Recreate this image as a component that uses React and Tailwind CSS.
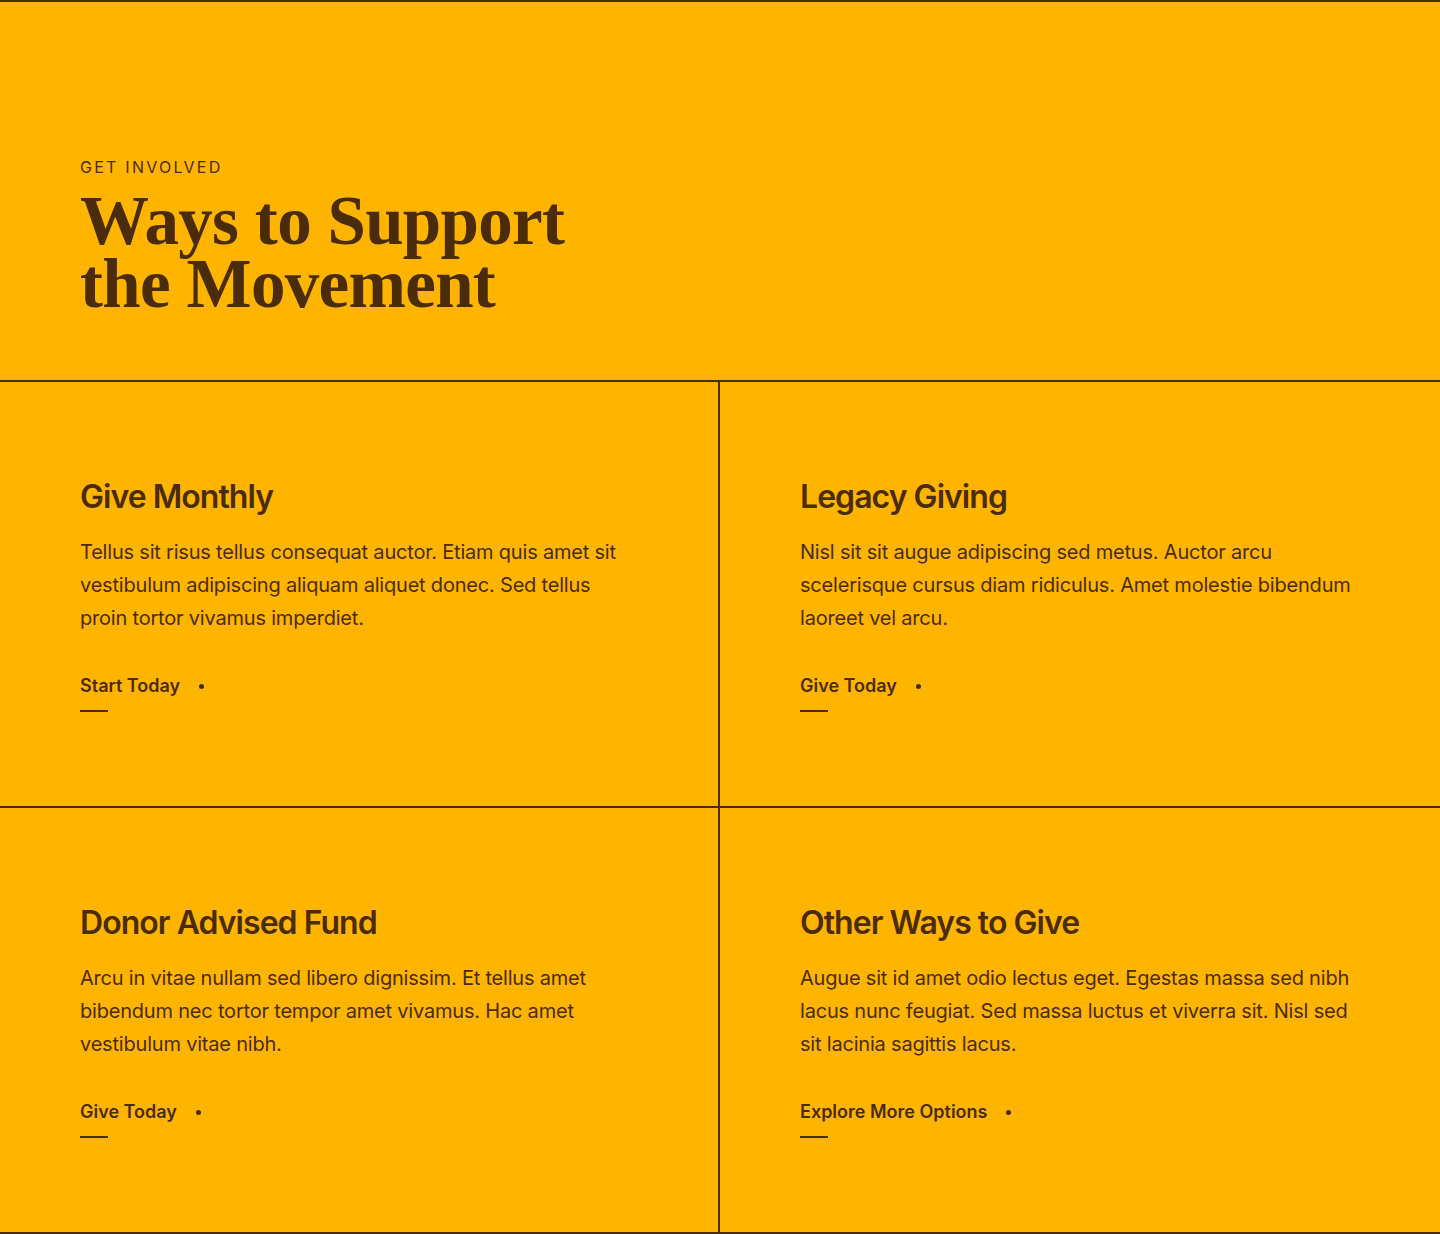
import React from "react";

const ways = [
  {
    title: "Give Monthly",
    body: "Tellus sit risus tellus consequat auctor. Etiam quis amet sit vestibulum adipiscing aliquam aliquet donec. Sed tellus proin tortor vivamus imperdiet.",
    link: "Start Today",
  },
  {
    title: "Legacy Giving",
    body: "Nisl sit sit augue adipiscing sed metus. Auctor arcu scelerisque cursus diam ridiculus. Amet molestie bibendum laoreet vel arcu.",
    link: "Give Today",
  },
  {
    title: "Donor Advised Fund",
    body: "Arcu in vitae nullam sed libero dignissim. Et tellus amet bibendum nec tortor tempor amet vivamus. Hac amet vestibulum vitae nibh.",
    link: "Give Today",
  },
  {
    title: "Other Ways to Give",
    body: "Augue sit id amet odio lectus eget. Egestas massa sed nibh lacus nunc feugiat. Sed massa luctus et viverra sit. Nisl sed sit lacinia sagittis lacus.",
    link: "Explore More Options",
  },
];

const WayCard = ({ item, index }) => {
  return (
    <div
      className={
        "px-20 pt-[95px] pb-[94px] border-[#4a2c0b] " +
        (index % 2 === 0 ? "border-r-2 " : "") +
        (index < 2 ? "border-b-2" : "")
      }
    >
      <h3 className="text-[32px] leading-[40px] font-semibold tracking-[-0.03em]">
        {item.title}
      </h3>
      <p className="mt-[19px] max-w-[560px] text-[20px] leading-[33px] tracking-[-0.01em]">
        {item.body}
      </p>
      <a href="#" className="mt-[39px] inline-flex flex-col gap-[12px]">
        <span className="flex items-center gap-[19px] text-[18px] leading-[24px] font-semibold tracking-normal">
          {item.link}
          <span className="w-[5px] h-[5px] rounded-full bg-[#4a2c0b]" />
        </span>
        <span className="w-[28px] h-[2px] bg-[#4a2c0b]" />
      </a>
    </div>
  );
};

const App = () => {
  return (
    <section
      className="bg-[#ffb500] text-[#4a2c0b] border-y-2 border-[#4a2c0b]"
      style={{ fontFamily: "Inter, 'Liberation Sans', sans-serif" }}
    >
      {/* Header */}
      <div className="px-20 pt-[155px] pb-[64px] border-b-2 border-[#4a2c0b]">
        <p className="text-[16px] leading-[20px] tracking-[0.14em] uppercase">
          Get Involved
        </p>
        <h2 className="mt-[13px] font-['Liberation_Serif',serif] font-bold text-[69px] leading-[63px] tracking-[-0.01em]">
          Ways to Support
          <br />
          the Movement
        </h2>
      </div>

      {/* Cards */}
      <div className="grid grid-cols-2">
        {ways.map((item, i) => (
          <WayCard key={item.title} item={item} index={i} />
        ))}
      </div>
    </section>
  );
};

export default App;
